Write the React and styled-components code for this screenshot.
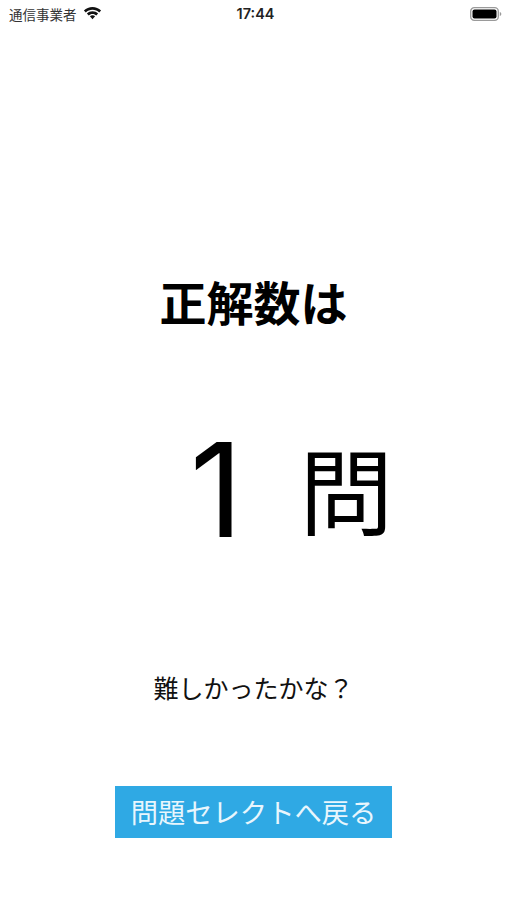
import React from 'react';
import styled, { createGlobalStyle } from 'styled-components';

const cjk = `"Noto Sans CJK JP", "Noto Sans", sans-serif`;

const GlobalStyle = createGlobalStyle`
  html, body {
    margin: 0;
    padding: 0;
    background: #fff;
  }
`;

function WifiIcon() {
    return (
        <svg width="19" height="14" viewBox="0 0 19 14">
            <path d="M9.500 2.800c2.600 0 4.900 1 6.700 2.700l1.900-2C15.800 1.300 12.800 0 9.500 0S3.200 1.300.9 3.500l1.900 2c1.800-1.700 4.100-2.700 6.700-2.700z" fill="#111" />
            <path d="M9.500 6.900c1.500 0 2.800.6 3.800 1.500l1.800-1.900C13.600 5.100 11.700 4.200 9.500 4.200S5.400 5.100 3.900 6.500l1.800 1.900c1-.9 2.300-1.500 3.800-1.500z" fill="#111" />
            <path d="M9.500 8.300c-1 0-1.900.4-2.600 1l2.600 3 2.600-3c-.7-.6-1.600-1-2.600-1z" fill="#111" />
        </svg>
    );
}

function BatteryIcon() {
    return (
        <svg width="32" height="14" viewBox="0 0 32 14">
            <rect x="0.700" y="0.700" width="27.600" height="12.600" rx="3.600" fill="none" stroke="#9a9a9a" strokeWidth="1.300" />
            <rect x="2.500" y="2.500" width="24" height="9" rx="2" fill="#000" />
            <path d="M29.800 5v4c.9-.3 1.500-1.100 1.500-2s-.6-1.700-1.500-2z" fill="#9a9a9a" />
        </svg>
    );
}

export default function App() {
    return (
        <Page>
            <GlobalStyle />
            <StatusBar>
                <Carrier>
                    通信事業者
                    <WifiIcon />
                </Carrier>
                <Clock>17:44</Clock>
                <Battery>
                    <BatteryIcon />
                </Battery>
            </StatusBar>
            <Content>
                <Title>正解数は</Title>
                <ScoreRow>
                    <ScoreNumber>1</ScoreNumber>
                    <ScoreUnit>問</ScoreUnit>
                </ScoreRow>
                <Message>難しかったかな？</Message>
                <BackButton>問題セレクトへ戻る</BackButton>
            </Content>
        </Page>
    );
}

const Page = styled.div`
  width: 507px;
  height: 900px;
  overflow: hidden;
  background: #fff;
  color: #000;
  font-family: ${cjk};
`;

const StatusBar = styled.div`
  display: grid;
  grid-template-columns: 1fr auto 1fr;
  align-items: center;
  height: 27px;
  padding: 0 5px 1px 9px;
`;

const Carrier = styled.div`
  display: flex;
  align-items: center;
  gap: 6px;
  font-size: 13.500px;
  line-height: 18px;
  color: #333;
`;

const Clock = styled.div`
  font-family: "Inter", "Liberation Sans", sans-serif;
  font-size: 14.500px;
  font-weight: 600;
  color: #222;
`;

const Battery = styled.div`
  display: flex;
  justify-content: flex-end;
`;

const Content = styled.div`
  display: flex;
  flex-direction: column;
  align-items: center;
`;

const Title = styled.h1`
  margin: 239px 0 0;
  font-size: 47px;
  line-height: 68px;
  font-weight: 600;
`;

const ScoreRow = styled.div`
  display: flex;
  align-items: flex-end;
  gap: 56px;
  margin-top: 87px;
  padding-left: 76px;
  height: 130px;
`;

const ScoreNumber = styled.div`
  font-family: "Inter", "Liberation Sans", sans-serif;
  font-size: 131px;
  line-height: 125px;
  font-weight: 400;
`;

const ScoreUnit = styled.div`
  font-size: 94px;
  line-height: 130px;
  font-weight: 400;
`;

const Message = styled.p`
  margin: 117px 0 0;
  font-size: 25px;
  line-height: 36px;
  font-weight: 400;
  color: #111;
`;

const BackButton = styled.button`
  display: flex;
  align-items: center;
  justify-content: center;
  margin-top: 81px;
  width: 277px;
  height: 52px;
  padding: 0 0 3px;
  border: none;
  background: #2fa9e4;
  color: #e8f6fd;
  font-family: ${cjk};
  font-size: 27.300px;
`;
